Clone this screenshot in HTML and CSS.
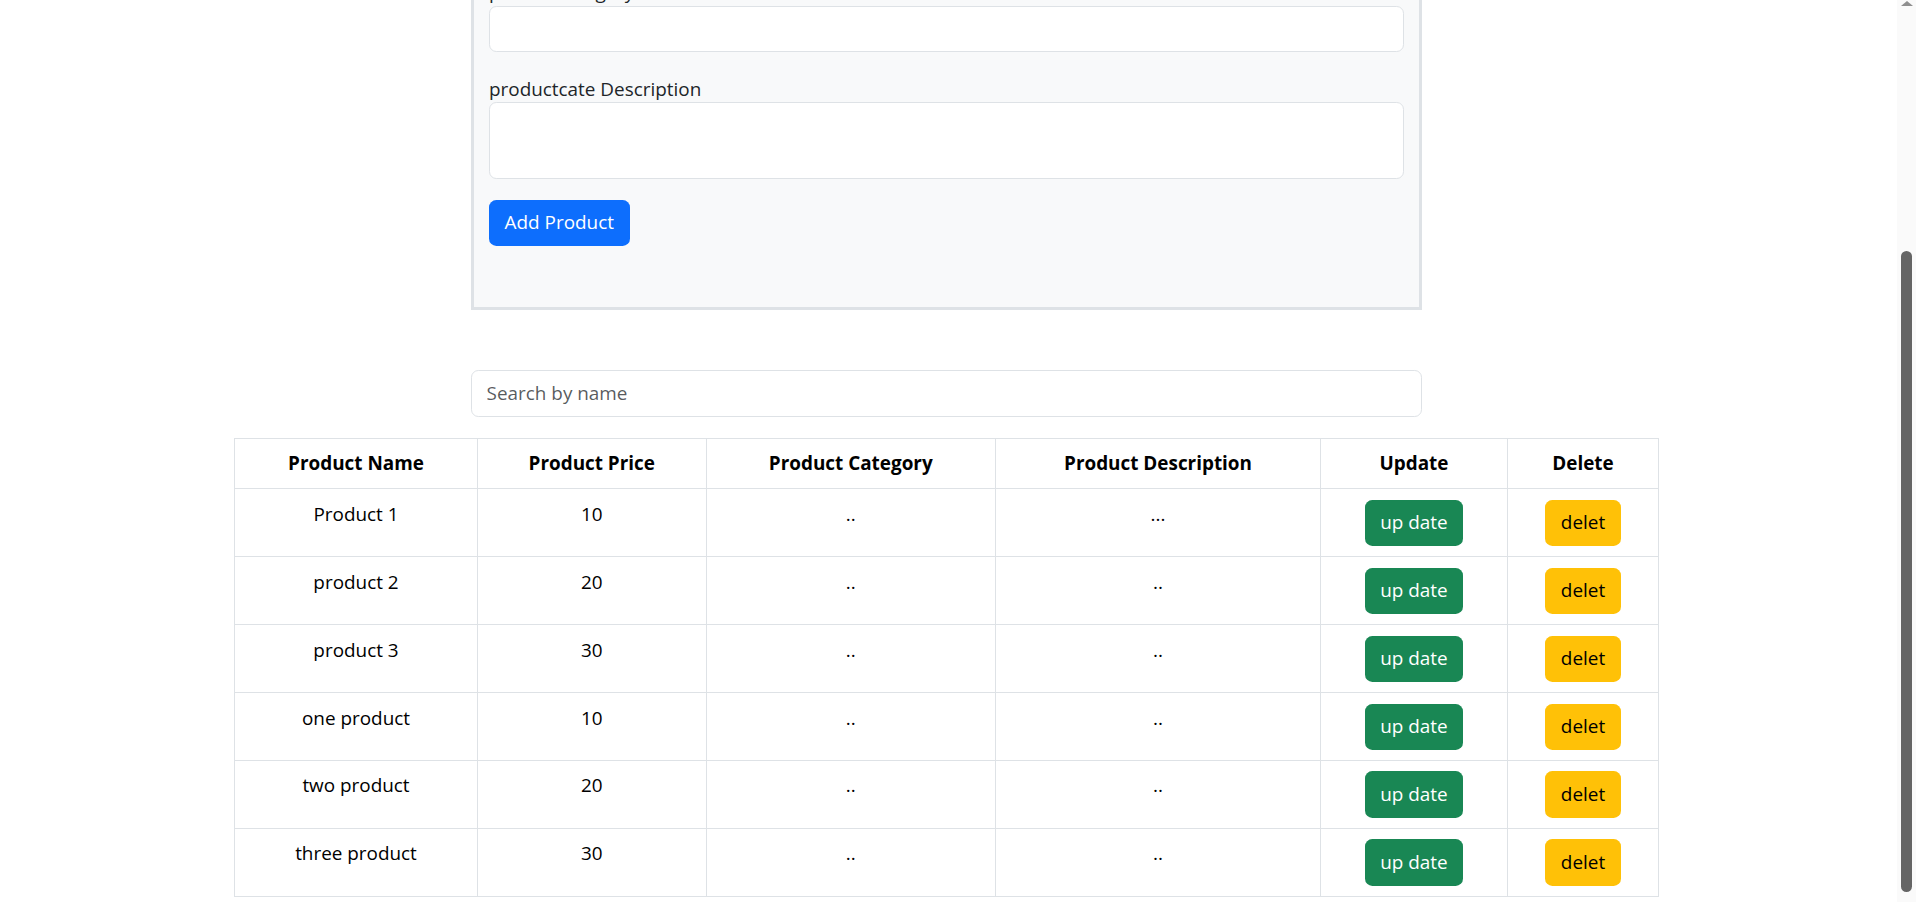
FILE: index.html
```html
<!DOCTYPE html>
<html>
<head>
<meta charset="utf-8">
<title>Products</title>
<link rel="stylesheet" href="styles.css">
</head>
<body>
<div class="viewport" id="viewport">
    <div class="page">
        <div class="form-card">
            <h3>Product Form</h3>
            <div class="field">
                <label for="productName">product Name</label>
                <input type="text" id="productName" class="control">
            </div>
            <div class="field">
                <label for="productPrice">product Price</label>
                <input type="text" id="productPrice" class="control">
            </div>
            <div class="field">
                <label for="productCategory">productcategory</label>
                <input type="text" id="productCategory" class="control">
            </div>
            <div class="field">
                <label for="productDesc">productcate Description</label>
                <textarea id="productDesc" class="control"></textarea>
            </div>
            <button class="btn btn-primary">Add Product</button>
        </div>

        <input type="text" class="control search" placeholder="Search by name">

        <table class="products">
            <colgroup>
                <col style="width: 243px">
                <col style="width: 228.5px">
                <col style="width: 289.5px">
                <col style="width: 325px">
                <col style="width: 187px">
                <col style="width: 151px">
            </colgroup>
            <thead>
                <tr>
                    <th>Product Name</th>
                    <th>Product Price</th>
                    <th>Product Category</th>
                    <th>Product Description</th>
                    <th>Update</th>
                    <th>Delete</th>
                </tr>
            </thead>
            <tbody>
                <tr>
                    <td>Product 1</td>
                    <td>10</td>
                    <td>..</td>
                    <td>...</td>
                    <td><button class="btn btn-success">up date</button></td>
                    <td><button class="btn btn-warning">delet</button></td>
                </tr>
                <tr>
                    <td>product 2</td>
                    <td>20</td>
                    <td>..</td>
                    <td>..</td>
                    <td><button class="btn btn-success">up date</button></td>
                    <td><button class="btn btn-warning">delet</button></td>
                </tr>
                <tr>
                    <td>product 3</td>
                    <td>30</td>
                    <td>..</td>
                    <td>..</td>
                    <td><button class="btn btn-success">up date</button></td>
                    <td><button class="btn btn-warning">delet</button></td>
                </tr>
                <tr>
                    <td>one product</td>
                    <td>10</td>
                    <td>..</td>
                    <td>..</td>
                    <td><button class="btn btn-success">up date</button></td>
                    <td><button class="btn btn-warning">delet</button></td>
                </tr>
                <tr>
                    <td>two product</td>
                    <td>20</td>
                    <td>..</td>
                    <td>..</td>
                    <td><button class="btn btn-success">up date</button></td>
                    <td><button class="btn btn-warning">delet</button></td>
                </tr>
                <tr>
                    <td>three product</td>
                    <td>30</td>
                    <td>..</td>
                    <td>..</td>
                    <td><button class="btn btn-success">up date</button></td>
                    <td><button class="btn btn-warning">delet</button></td>
                </tr>
            </tbody>
        </table>
    </div>
</div>

<!-- scrollbar drawn by hand, the browser hides its own -->
<div class="rail">
    <div class="rail-arrow"></div>
    <div class="rail-thumb"></div>
</div>

<script>
function scrollToEnd() {
    var view = document.getElementById('viewport');
    view.scrollTop = view.scrollHeight;
}
scrollToEnd();
window.addEventListener('load', scrollToEnd);
</script>
</body>
</html>
```

FILE: styles.css
```css
body {
    margin: 0;
    height: 100vh;
    overflow: hidden;
    display: flex;
    font-family: "Open Sans", "Segoe UI", sans-serif;
    font-size: 18.9px;
    line-height: 29.25px;
    color: #212529;
    background-color: #fff;
}

.viewport {
    flex: 1;
    height: 100%;
    overflow: hidden;
}

.rail {
    width: 19px;
    flex-shrink: 0;
    background-color: #fafafa;
    display: flex;
    flex-direction: column;
    align-items: center;
}

.rail-arrow {
    width: 0;
    height: 0;
    margin-top: 1px;
    border-left: 6px solid transparent;
    border-right: 6px solid transparent;
    border-bottom: 5px solid #8f8f8f;
}

.rail-thumb {
    width: 11px;
    height: 641px;
    margin-top: 245px;
    border-radius: 6px;
    background-color: #656565;
}

.page {
    display: flex;
    flex-direction: column;
    align-items: center;
    padding: 24px 4px 5px 0;
}

.form-card {
    width: 951px;
    box-sizing: border-box;
    border: 3px solid #dee2e6;
    background-color: #f8f9fa;
    padding: 15px 15px 61px;
}

.form-card h3 {
    margin: 0 0 20px;
    font-size: 28px;
    line-height: 35px;
    font-weight: 500;
}

.field {
    margin-bottom: 21px;
}

.field label {
    display: block;
    padding-top: 2px;
    margin-bottom: -2px;
}

.control {
    display: block;
    width: 100%;
    height: 46.45px;
    box-sizing: border-box;
    padding: 0 14.6px;
    border: 1px solid #dee2e6;
    border-radius: 7.3px;
    background-color: #fff;
    font: inherit;
    color: #212529;
    outline: none;
}

textarea.control {
    height: 76.5px;
    padding: 7.3px 14.6px;
    resize: none;
}

.control::placeholder {
    color: rgba(33, 37, 41, 0.75);
}

.btn {
    font: inherit;
    line-height: 29.25px;
    padding: 7.6px 14.6px;
    border: 1px solid transparent;
    border-radius: 7.3px;
    cursor: pointer;
}

.btn-primary {
    background-color: #0d6efd;
    color: #fff;
}

.btn-success {
    background-color: #198754;
    color: #fff;
}

.btn-warning {
    background-color: #ffc107;
    color: #000;
}

.search {
    width: 951px;
    margin-top: 60px;
}

.products {
    width: 1424px;
    margin-top: 21px;
    table-layout: fixed;
    border-collapse: collapse;
    border: 1px solid #dee2e6;
    color: #000;
}

.products th,
.products td {
    border: 1px solid #dee2e6;
    padding: 10.25px 10px;
    text-align: center;
    vertical-align: top;
}

.products th {
    font-weight: 700;
}
```
